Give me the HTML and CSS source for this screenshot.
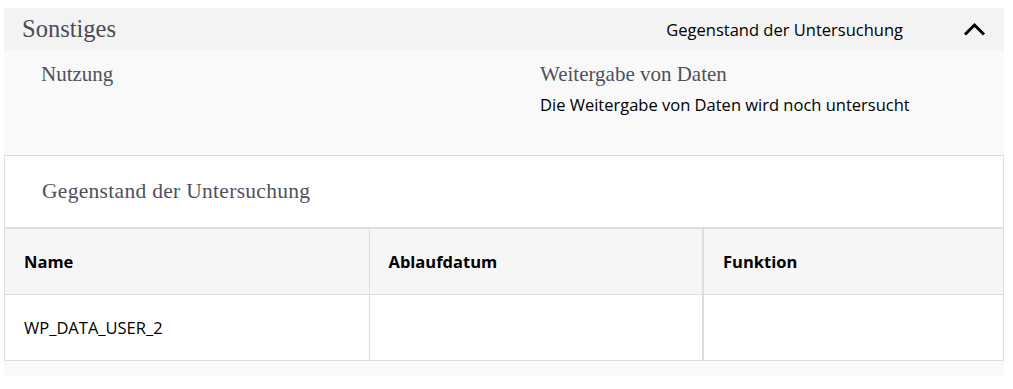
FILE: index.html
```html
<!DOCTYPE html>
<html lang="de">
<head>
    <meta charset="UTF-8">
    <meta name="viewport" content="width=device-width, initial-scale=1.0">
    <title>Sonstiges</title>
    <link rel="stylesheet" href="styles.css">
</head>
<body>
    <div class="section">
        <div class="section-head">
            <h2 class="section-title">Sonstiges</h2>
            <span class="section-label">Gegenstand der Untersuchung</span>
            <svg class="chevron" width="23" height="14" viewBox="0 0 23 14">
                <path d="M2 12.5 L11.5 3 L21 12.5" fill="none" stroke="#000" stroke-width="3"/>
            </svg>
        </div>

        <div class="section-body">
            <div class="info">
                <div class="info-col">
                    <h3 class="info-title">Nutzung</h3>
                </div>
                <div class="info-col">
                    <h3 class="info-title">Weitergabe von Daten</h3>
                    <p class="info-text">Die Weitergabe von Daten wird noch untersucht</p>
                </div>
            </div>

            <div class="box">
                <h3 class="box-title">Gegenstand der Untersuchung</h3>
                <table class="cookies">
                    <colgroup>
                        <col class="col-name">
                        <col class="col-date">
                        <col>
                    </colgroup>
                    <thead>
                        <tr>
                            <th>Name</th>
                            <th>Ablaufdatum</th>
                            <th class="last">Funktion</th>
                        </tr>
                    </thead>
                    <tbody>
                        <tr>
                            <td>WP_DATA_USER_2</td>
                            <td></td>
                            <td class="last"></td>
                        </tr>
                    </tbody>
                </table>
            </div>
        </div>
    </div>
</body>
</html>
```

FILE: styles.css
```css
body {
    margin: 0;
    padding: 8px 9px 0 4px;
    font-family: "Open Sans", "Noto Sans", sans-serif;
    color: #000;
    background-color: #fff;
}

.section {
    width: 1000px;
}

.section-head {
    display: flex;
    align-items: center;
    height: 42px;
    padding: 0 18px;
    background-color: #f3f3f3;
}

.section-title {
    flex: 1;
    margin: 0;
    font-family: "Liberation Serif", serif;
    font-size: 24.5px;
    font-weight: normal;
    color: #4a4a58;
}

.section-label {
    font-size: 16.5px;
    margin-right: 60px;
}

.chevron {
    display: block;
}

.section-body {
    background-color: #f9f9f9;
    padding-bottom: 15px;
}

.info {
    display: grid;
    grid-template-columns: 499px 1fr;
    height: 105px;
    padding-left: 37px;
}

.info-title {
    margin: 12px 0 0;
    font-family: "Liberation Serif", serif;
    font-size: 21px;
    font-weight: normal;
    color: #50505c;
    line-height: 24px;
}

.info-text {
    margin: 8px 0 0;
    font-size: 16.5px;
    line-height: 22px;
}

.box {
    background-color: #fff;
    border: 1px solid #ddd;
}

.box-title {
    margin: 0;
    height: 71px;
    padding-left: 37px;
    font-family: "Liberation Serif", serif;
    font-size: 21.5px;
    letter-spacing: 0.3px;
    font-weight: normal;
    line-height: 71px;
    color: #50505c;
}

.cookies {
    width: 100%;
    border-collapse: collapse;
    table-layout: fixed;
    border-top: 2px solid #ddd;
}

.col-name {
    width: 364px;
}

.col-date {
    width: 334px;
}

.cookies th,
.cookies td {
    height: 65px;
    padding: 0 19px;
    text-align: left;
    font-size: 16.5px;
    border-left: 1px solid #ddd;
}

.cookies th:first-child,
.cookies td:first-child {
    border-left: none;
}

.cookies th.last,
.cookies td.last {
    border-left: 2px solid #ddd;
}

.cookies th {
    background-color: #f6f6f6;
    font-weight: bold;
    border-bottom: 1px solid #ddd;
}
```
